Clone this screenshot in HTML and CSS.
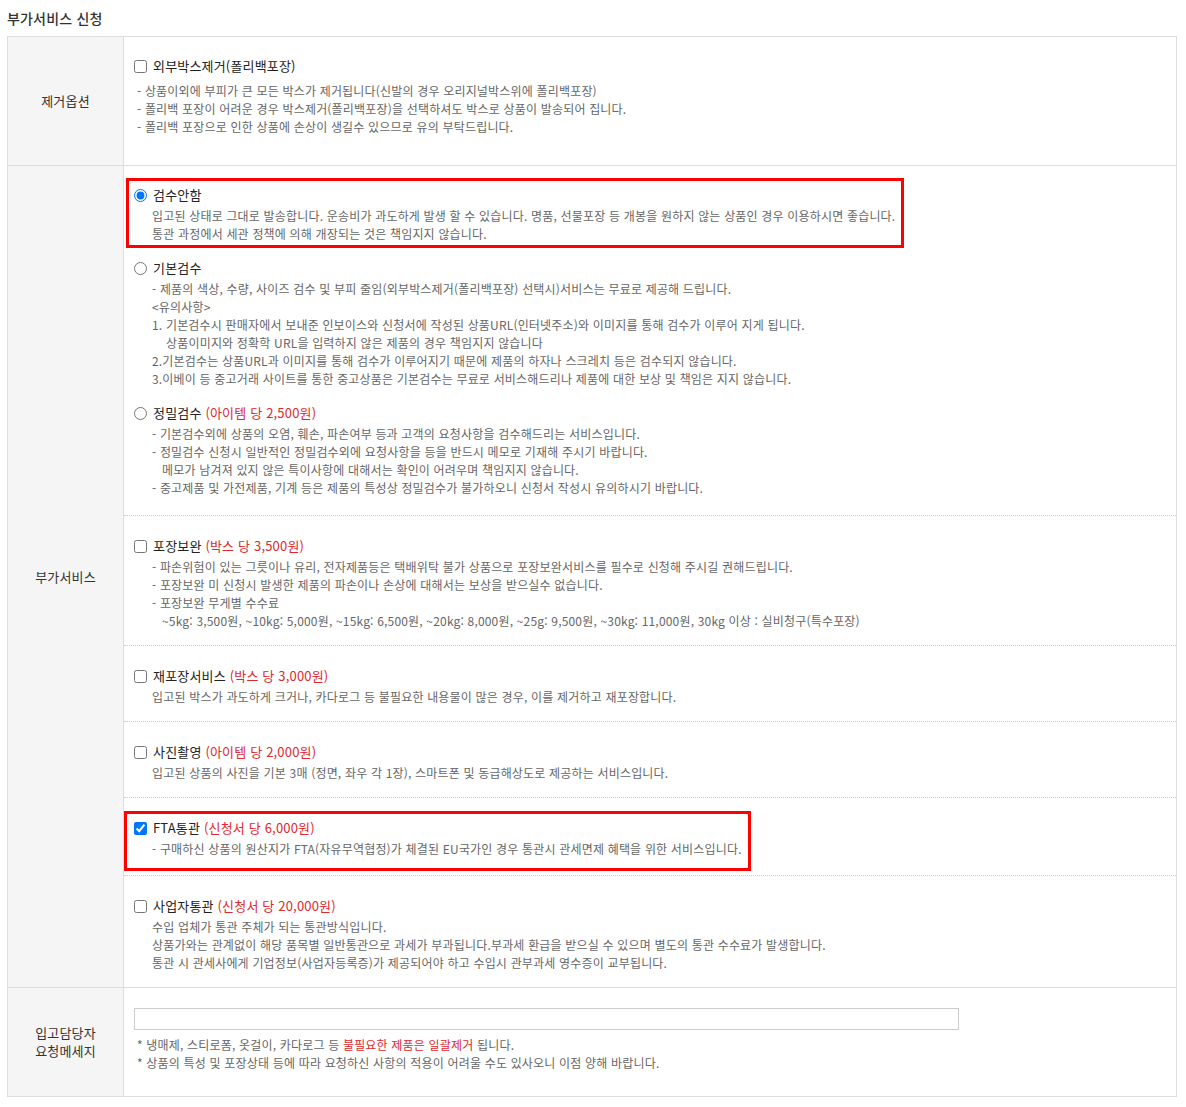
FILE: index.html
```html
<!DOCTYPE html>
<html lang="ko">
<head>
    <meta charset="UTF-8">
    <meta name="viewport" content="width=device-width, initial-scale=1.0">
    <title>부가서비스 신청</title>
    <link rel="stylesheet" href="styles.css">
</head>
<body>
    <h3 class="section-title">부가서비스 신청</h3>
    <table class="service-table">
        <tr>
            <th>제거옵션</th>
            <td>
                <div class="opt-group remove-group">
                    <label class="opt-label"><input type="checkbox"><span>외부박스제거(폴리백포장)</span></label>
                    <div class="opt-desc">
                        <div>- 상품이외에 부피가 큰 모든 박스가 제거됩니다(신발의 경우 오리지널박스위에 폴리백포장)</div>
                        <div>- 폴리백 포장이 어려운 경우 박스제거(폴리백포장)을 선택하셔도 박스로 상품이 발송되어 집니다.</div>
                        <div>- 폴리백 포장으로 인한 상품에 손상이 생길수 있으므로 유의 부탁드립니다.</div>
                    </div>
                </div>
            </td>
        </tr>
        <tr>
            <th>부가서비스</th>
            <td>
                <div class="opt-group inspect-group">
                    <div class="opt-item marked">
                        <label class="opt-label"><input type="radio" name="inspect" checked><span>검수안함</span></label>
                        <div class="opt-desc">
                            <div>입고된 상태로 그대로 발송합니다. 운송비가 과도하게 발생 할 수 있습니다. 명품, 선물포장 등 개봉을 원하지 않는 상품인 경우 이용하시면 좋습니다.</div>
                            <div>통관 과정에서 세관 정책에 의해 개장되는 것은 책임지지 않습니다.</div>
                        </div>
                    </div>
                    <div class="opt-item">
                        <label class="opt-label"><input type="radio" name="inspect"><span>기본검수</span></label>
                        <div class="opt-desc">
                            <div>- 제품의 색상, 수량, 사이즈 검수 및 부피 줄임(외부박스제거(폴리백포장) 선택시)서비스는 무료로 제공해 드립니다.</div>
                            <div>&lt;유의사항&gt;</div>
                            <div>1. 기본검수시 판매자에서 보내준 인보이스와 신청서에 작성된 상품URL(인터넷주소)와 이미지를 통해 검수가 이루어 지게 됩니다.</div>
                            <div class="indent-wide">상품이미지와 정확학 URL을 입력하지 않은 제품의 경우 책임지지 않습니다</div>
                            <div>2.기본검수는 상품URL과 이미지를 통해 검수가 이루어지기 때문에 제품의 하자나 스크레치 등은 검수되지 않습니다.</div>
                            <div>3.이베이 등 중고거래 사이트를 통한 중고상품은 기본검수는 무료로 서비스해드리나 제품에 대한 보상 및 책임은 지지 않습니다.</div>
                        </div>
                    </div>
                    <div class="opt-item">
                        <label class="opt-label"><input type="radio" name="inspect"><span>정밀검수 <em class="price">(아이템 당 2,500원)</em></span></label>
                        <div class="opt-desc">
                            <div>- 기본검수외에 상품의 오염, 훼손, 파손여부 등과 고객의 요청사항을 검수해드리는 서비스입니다.</div>
                            <div>- 정밀검수 신청시 일반적인 정밀검수외에 요청사항을 등을 반드시 메모로 기재해 주시기 바랍니다.</div>
                            <div class="indent">메모가 남겨져 있지 않은 특이사항에 대해서는 확인이 어려우며 책임지지 않습니다.</div>
                            <div>- 중고제품 및 가전제품, 기계 등은 제품의 특성상 정밀검수가 불가하오니 신청서 작성시 유의하시기 바랍니다.</div>
                        </div>
                    </div>
                </div>
                <div class="opt-group">
                    <label class="opt-label"><input type="checkbox"><span>포장보완 <em class="price">(박스 당 3,500원)</em></span></label>
                    <div class="opt-desc">
                        <div>- 파손위험이 있는 그릇이나 유리, 전자제품등은 택배위탁 불가 상품으로 포장보완서비스를 필수로 신청해 주시길 권해드립니다.</div>
                        <div>- 포장보완 미 신청시 발생한 제품의 파손이나 손상에 대해서는 보상을 받으실수 없습니다.</div>
                        <div>- 포장보완 무게별 수수료</div>
                        <div class="indent">~5kg: 3,500원, ~10kg: 5,000원, ~15kg: 6,500원, ~20kg: 8,000원, ~25g: 9,500원, ~30kg: 11,000원, 30kg 이상 : 실비청구(특수포장)</div>
                    </div>
                </div>
                <div class="opt-group">
                    <label class="opt-label"><input type="checkbox"><span>재포장서비스 <em class="price">(박스 당 3,000원)</em></span></label>
                    <div class="opt-desc">
                        <div>입고된 박스가 과도하게 크거나, 카다로그 등 불필요한 내용물이 많은 경우, 이를 제거하고 재포장합니다.</div>
                    </div>
                </div>
                <div class="opt-group">
                    <label class="opt-label"><input type="checkbox"><span>사진촬영 <em class="price">(아이템 당 2,000원)</em></span></label>
                    <div class="opt-desc">
                        <div>입고된 상품의 사진을 기본 3매 (정면, 좌우 각 1장), 스마트폰 및 동급해상도로 제공하는 서비스입니다.</div>
                    </div>
                </div>
                <div class="opt-group fta-group">
                    <div class="opt-item marked marked-wide">
                        <label class="opt-label"><input type="checkbox" checked><span>FTA통관 <em class="price">(신청서 당 6,000원)</em></span></label>
                        <div class="opt-desc">
                            <div>- 구매하신 상품의 원산지가 FTA(자유무역협정)가 체결된 EU국가인 경우 통관시 관세면제 혜택을 위한 서비스입니다.</div>
                        </div>
                    </div>
                </div>
                <div class="opt-group last-group">
                    <label class="opt-label"><input type="checkbox"><span>사업자통관 <em class="price">(신청서 당 20,000원)</em></span></label>
                    <div class="opt-desc">
                        <div>수입 업체가 통관 주체가 되는 통관방식입니다.</div>
                        <div>상품가와는 관계없이 해당 품목별 일반통관으로 과세가 부과됩니다.부과세 환급을 받으실 수 있으며 별도의 통관 수수료가 발생합니다.</div>
                        <div>통관 시 관세사에게 기업정보(사업자등록증)가 제공되어야 하고 수입시 관부과세 영수증이 교부됩니다.</div>
                    </div>
                </div>
            </td>
        </tr>
        <tr>
            <th>입고담당자<br>요청메세지</th>
            <td class="memo-cell">
                <input type="text" class="memo-input">
                <div class="memo-notes">
                    <div>* 냉매제, 스티로폼, 옷걸이, 카다로그 등 <span class="price">불필요한 제품은 일괄제거</span> 됩니다.</div>
                    <div>* 상품의 특성 및 포장상태 등에 따라 요청하신 사항의 적용이 어려울 수도 있사오니 이점 양해 바랍니다.</div>
                </div>
            </td>
        </tr>
    </table>
</body>
</html>
```

FILE: styles.css
```css
body {
    margin: 0;
    padding: 0 7px;
    font-family: "Noto Sans CJK KR", "Noto Sans", sans-serif;
    letter-spacing: 0.18px;
    color: #333;
    background-color: #fff;
}
.section-title {
    margin: 0;
    padding: 8px 0;
    font-size: 14px;
    line-height: 20px;
    font-weight: 500;
    color: #333;
}
.service-table {
    width: 1170px;
    border-collapse: collapse;
    border: 1px solid #ddd;
}
.service-table th {
    width: 115px;
    padding: 0;
    background-color: #f5f5f5;
    border: 1px solid #ddd;
    font-size: 13px;
    line-height: 18px;
    font-weight: normal;
    color: #333;
    text-align: center;
    vertical-align: middle;
}
.service-table td {
    padding: 0;
    border: 1px solid #ddd;
    vertical-align: top;
}
.opt-group {
    padding: 20px 10px 15px;
}
.opt-group + .opt-group {
    border-top: 1px dotted #ccc;
}
.opt-item + .opt-item {
    margin-top: 15px;
}
.opt-label {
    display: flex;
    align-items: center;
    font-size: 13px;
    line-height: 20px;
    color: #222;
}
.opt-label input {
    width: 13px;
    height: 13px;
    margin: 0 6px 0 0;
}
.price {
    font-style: normal;
    color: #e0282e;
}
.opt-desc {
    margin-top: 2px;
    padding-left: 18px;
    font-size: 12px;
    line-height: 18px;
    color: #666;
}
.indent {
    padding-left: 10px;
}
.indent-wide {
    padding-left: 14px;
}
.remove-group {
    padding-top: 19px;
    padding-bottom: 29px;
}
.remove-group .opt-desc {
    margin-top: 6px;
    padding-left: 3px;
}
.inspect-group {
    padding-top: 19px;
    padding-bottom: 18px;
}
.fta-group {
    padding-bottom: 17px;
}
.last-group {
    padding-bottom: 15px;
}
.marked {
    position: relative;
    width: fit-content;
}
.marked::after {
    content: "";
    position: absolute;
    top: -7px;
    left: -8px;
    right: -9px;
    bottom: -5px;
    border: 3px solid #f00;
    pointer-events: none;
}
.marked-wide::after {
    left: -10px;
    bottom: -13px;
}
.memo-cell {
    padding: 20px 10px 24px !important;
}
.memo-input {
    display: block;
    width: 825px;
    height: 22px;
    box-sizing: border-box;
    margin: 0;
    border: 1px solid #ccc;
}
.memo-notes {
    margin-top: 6px;
    padding-left: 3px;
    font-size: 12px;
    line-height: 18px;
    color: #666;
}
```
